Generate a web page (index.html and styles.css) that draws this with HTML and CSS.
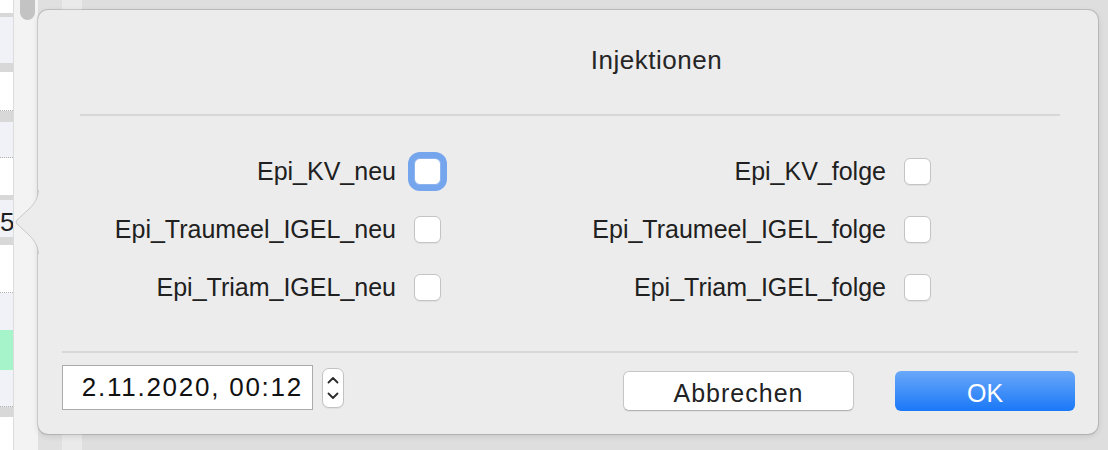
FILE: index.html
```html
<!DOCTYPE html>
<html lang="de">
<head>
<meta charset="utf-8">
<title>Injektionen</title>
<link rel="stylesheet" href="styles.css">
</head>
<body>
  <div class="list">
    <div class="row white h13"></div>
    <div class="row band h4"></div>
    <div class="row blue h46"></div>
    <div class="row band h9"></div>
    <div class="row white h39 dotted"></div>
    <div class="row band h11"></div>
    <div class="row blue h36 dotted"></div>
    <div class="row white h37"></div>
    <div class="row band h5"></div>
    <div class="row blue h37 num">5</div>
    <div class="row band h8"></div>
    <div class="row white h48 dotted"></div>
    <div class="row blue h37"></div>
    <div class="row green h40"></div>
    <div class="row blue h37 dotted"></div>
    <div class="row band h10"></div>
    <div class="row white fill"></div>
  </div>
  <div class="track"><div class="thumb"></div></div>
  <div class="stage">
    <div class="popover">
      <svg class="arrow" width="24" height="64" viewBox="0 0 24 64">
        <path class="arrow-fill" d="M24 0 C23 8 20 13 14 19 L2 30 Q0 32 2 34 L14 45 C20 51 23 56 24 64 Z"/>
        <path class="arrow-edge" d="M23.5 0 C23 8 20 13 14 19 L2 30 Q0 32 2 34 L14 45 C20 51 23 56 23.5 64"/>
      </svg>
      <div class="title">Injektionen</div>
      <div class="sep sep-top"></div>
      <div class="grid">
        <div class="label">Epi_KV_neu</div>
        <div class="cb focus"></div>
        <div class="label">Epi_KV_folge</div>
        <div class="cb"></div>
        <div class="label">Epi_Traumeel_IGEL_neu</div>
        <div class="cb"></div>
        <div class="label">Epi_Traumeel_IGEL_folge</div>
        <div class="cb"></div>
        <div class="label">Epi_Triam_IGEL_neu</div>
        <div class="cb"></div>
        <div class="label">Epi_Triam_IGEL_folge</div>
        <div class="cb"></div>
      </div>
      <div class="sep sep-bottom"></div>
      <div class="footer">
        <div class="date">2.11.2020, 00:12</div>
        <div class="stepper">
          <svg width="20" height="38" viewBox="0 0 20 38">
            <path d="M5.5 13.5 L10 9 L14.5 13.5" />
            <path d="M5.5 24.5 L10 29 L14.5 24.5" />
          </svg>
        </div>
        <div class="spacer"></div>
        <div class="btn cancel">Abbrechen</div>
        <div class="btn ok">OK</div>
      </div>
    </div>
  </div>
</body>
</html>
```
FILE: styles.css
```css
html, body {
  margin: 0;
  padding: 0;
}
body {
  width: 1108px;
  height: 450px;
  overflow: hidden;
  display: flex;
  font-family: "Liberation Sans", Arial, sans-serif;
  color: #222222;
  background: #e3e3e3;
}

/* background list on the far left */
.list {
  width: 13px;
  display: flex;
  flex-direction: column;
  overflow: hidden;
}
.row { flex: none; box-sizing: border-box; }
.white { background: #ffffff; }
.blue { background: #f0f2f8; }
.band { background: #d8d8d8; }
.green { background: #a6f4c9; }
.dotted { border-bottom: 1px dotted #b0b0b0; }
.h4 { height: 4px; }
.h5 { height: 5px; }
.h8 { height: 8px; }
.h9 { height: 9px; }
.h10 { height: 10px; }
.h11 { height: 11px; }
.h13 { height: 13px; }
.h36 { height: 36px; }
.h37 { height: 37px; }
.h39 { height: 39px; }
.h40 { height: 40px; }
.h46 { height: 46px; }
.h48 { height: 48px; }
.fill { flex: 1; }
.num {
  font-size: 26px;
  line-height: 29px;
  padding-top: 8px;
  text-align: right;
  color: #1e1e1e;
  white-space: nowrap;
}

/* scroll track */
.track {
  width: 25px;
  box-sizing: border-box;
  border-left: 1px solid #dcdcdc;
  background: #f3f3f3;
}
.thumb {
  margin-left: 6px;
  width: 15px;
  height: 20px;
  border-radius: 0 0 8px 8px;
  background: #c3c3c3;
}

/* area behind the popover */
.stage {
  flex: 1;
  padding: 10px 10px 0 0;
  background: linear-gradient(to right, #e0e0e0 0, #e0e0e0 24px, #eaeaea 24px, #eaeaea 44px, #dedede 44px);
}

.popover {
  position: relative;
  width: 1060px;
  height: 424px;
  box-sizing: border-box;
  background: #ececec;
  border-radius: 10px;
  box-shadow: 0 0 0 1px rgba(0, 0, 0, 0.13), 0 2px 6px rgba(0, 0, 0, 0.12);
}
.arrow {
  position: absolute;
  left: -23px;
  top: 180px;
  overflow: visible;
}
.arrow-fill { fill: #ececec; }
.arrow-edge { fill: none; stroke: #c9c9c9; stroke-width: 1; }

.title {
  padding-top: 35px;
  padding-left: 177px;
  text-align: center;
  font-size: 26px;
  line-height: 30px;
  letter-spacing: 0.5px;
  color: #262626;
}
.sep {
  height: 2px;
  background: #d7d7d7;
}
.sep-top { margin: 39px 38px 0 42px; }
.sep-bottom { margin: 35px 20px 0 24px; }

.grid {
  display: grid;
  grid-template-columns: 316px 27px 427px 27px;
  grid-auto-rows: 58px;
  column-gap: 18px;
  align-items: center;
  margin: 26px 0 0 42px;
}
.label {
  text-align: right;
  font-size: 25px;
  white-space: nowrap;
  color: #202020;
}
.cb {
  width: 27px;
  height: 27px;
  box-sizing: border-box;
  border: 1px solid #c4c4c4;
  border-radius: 6px;
  background: #ffffff;
  box-shadow: 0 1px 1px rgba(0, 0, 0, 0.06);
}
.cb.focus {
  border-color: #8db4ee;
  box-shadow: 0 0 0 6px #74a5ed;
}

.footer {
  display: flex;
  align-items: flex-start;
  padding: 0 23px 0 24px;
}
.date {
  margin-top: 12px;
  width: 251px;
  height: 45px;
  box-sizing: border-box;
  border: 1px solid #ababab;
  background: #ffffff;
  font-size: 26px;
  line-height: 43px;
  letter-spacing: 1.75px;
  text-align: right;
  padding-right: 9px;
  color: #111111;
  white-space: nowrap;
}
.stepper {
  margin-top: 15px;
  margin-left: 9px;
  width: 22px;
  height: 40px;
  box-sizing: border-box;
  border: 1px solid #c2c2c2;
  border-radius: 7px;
  background: #ffffff;
  box-shadow: 0 1px 1px rgba(0, 0, 0, 0.06);
}
.stepper svg { display: block; }
.stepper path {
  fill: none;
  stroke: #2b2b2b;
  stroke-width: 1.8;
  stroke-linecap: round;
  stroke-linejoin: round;
}
.spacer { flex: 1; }
.btn {
  margin-top: 18px;
  height: 40px;
  box-sizing: border-box;
  border-radius: 6px;
  font-size: 25px;
  text-align: center;
  padding-top: 3px;
  line-height: 36px;
  white-space: nowrap;
}
.cancel {
  width: 231px;
  background: #ffffff;
  border: 1px solid #c6c6c6;
  border-bottom-color: #b3b3b3;
  letter-spacing: 1px;
  color: #222222;
  box-shadow: 0 1px 1px rgba(0, 0, 0, 0.05);
}
.ok {
  width: 180px;
  margin-left: 41px;
  background: linear-gradient(#6aa8f9, #1a78f8);
  color: #ffffff;
  padding-top: 4px;
}
```
